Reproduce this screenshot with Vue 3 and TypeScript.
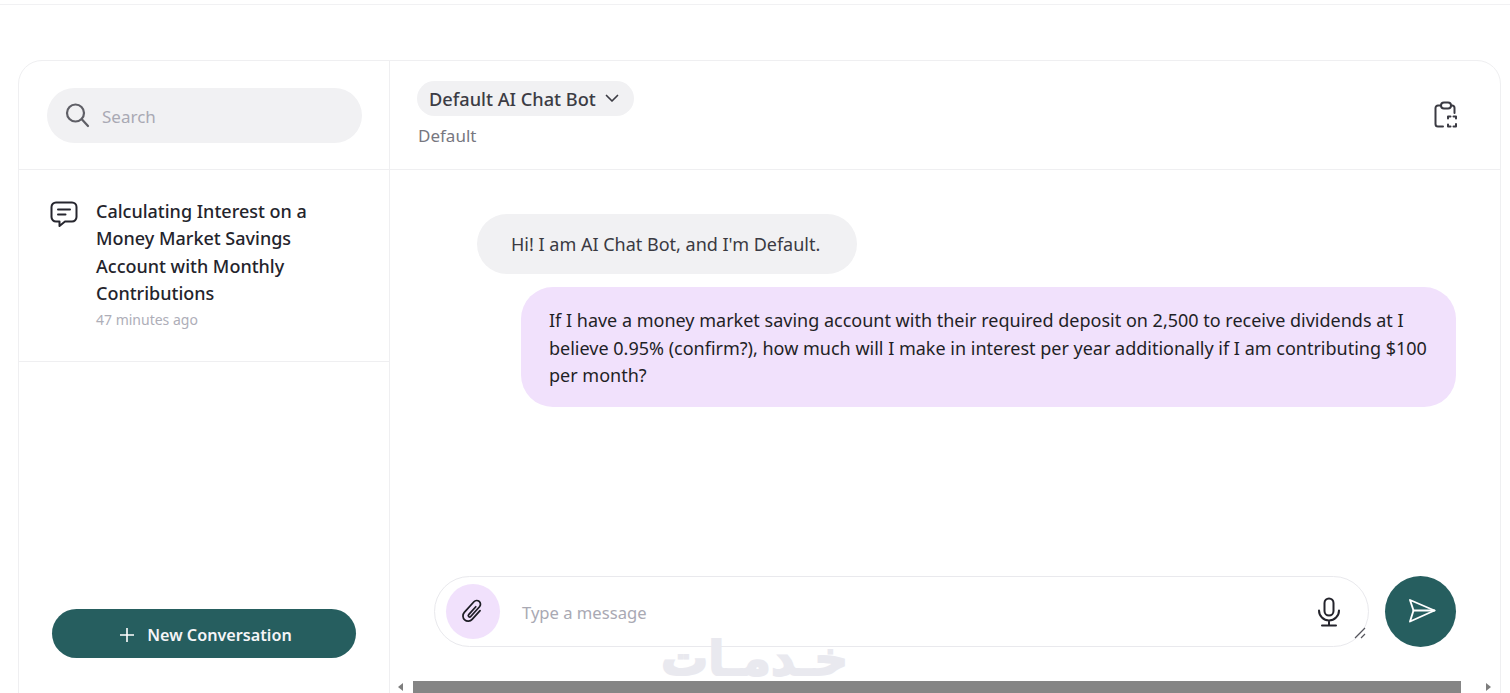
<script setup lang="ts">
const title: string = 'Calculating Interest on a Money Market Savings Account with Monthly Contributions'
</script>

<template>
  <div class="page">
    <div class="topline"></div>
    <div class="card">
      <aside class="side">
        <div class="side-head">
          <div class="search">
            <svg class="search-ico" width="26" height="26" viewBox="0 0 26 26" fill="none" stroke="#5f5f66" stroke-width="2.2" stroke-linecap="round"><circle cx="11.5" cy="11" r="8.5"/><path d="M17.8 17.2 24 24"/></svg>
            <span class="search-text">Search</span>
          </div>
        </div>
        <div class="conv">
          <svg class="conv-ico" width="28" height="27" viewBox="0 0 28 27" fill="none" stroke="#26262e" stroke-width="2" stroke-linecap="round" stroke-linejoin="round"><path d="M6 1.5h16a4.500 4.500 0 0 1 4.500 4.500v10a4.500 4.500 0 0 1-4.500 4.500h-7l-5.500 4.500v-4.500h-3.500a4.500 4.500 0 0 1-4.500-4.500v-10a4.500 4.500 0 0 1 4.500-4.500z"/><path d="M8 8.500h12M8 13.500h7.500"/></svg>
          <div class="conv-body">
            <div class="conv-title">{{ title }}</div>
            <div class="conv-time">47 minutes ago</div>
          </div>
        </div>
        <div class="side-foot">
          <button class="new-btn">
            <svg width="16" height="16" viewBox="0 0 16 16" fill="none" stroke="#fff" stroke-width="1.600"><path d="M8 1v14M1 8h14"/></svg>
            <span>New Conversation</span>
          </button>
        </div>
      </aside>
      <main class="main">
        <header class="main-head">
          <div class="head-left">
            <div class="bot-pill">
              <span>Default AI Chat Bot</span>
              <svg width="14" height="9" viewBox="0 0 14 9" fill="none" stroke="#3c3c44" stroke-width="1.700" stroke-linecap="round" stroke-linejoin="round"><path d="M1.500 1.500 7 7l5.500-5.500"/></svg>
            </div>
            <div class="bot-sub">Default</div>
          </div>
          <svg class="clip" width="24" height="28" viewBox="0 0 24 28" fill="none" stroke="#3a3a42" stroke-width="2" stroke-linecap="round" stroke-linejoin="round">
            <path d="M6.500 4.500h-2.500a2.500 2.500 0 0 0-2.500 2.500v16a2.500 2.500 0 0 0 2.500 2.500h5"/>
            <path d="M17.500 4.500h1a2.500 2.500 0 0 1 2 2.500v5"/>
            <rect x="7" y="1.500" width="10" height="6" rx="3"/>
            <path d="M14 17.500v-2h2.500M19.500 15.500h2.500v2M22 23v2.500h-2.500M16.500 25.500h-2.500v-2"/>
          </svg>
        </header>
        <div class="messages">
          <div class="bubble bot">Hi! I am AI Chat Bot, and I'm Default.</div>
          <div class="bubble user">If I have a money market saving account with their required deposit on 2,500 to receive dividends at I believe 0.95% (confirm?), how much will I make in interest per year additionally if I am contributing $100 per month?</div>
        </div>
        <div class="composer">
          <div class="input">
            <div class="attach">
              <svg width="30" height="30" viewBox="0 0 24 24" fill="none" stroke="#1d1d24" stroke-width="1.400" stroke-linecap="round" stroke-linejoin="round"><path transform="rotate(42 12 12)" d="M16 8v9.500a4.200 4.200 0 0 1-8.400 0V6a3 3 0 0 1 6 0v10.500a1.100 1.100 0 0 1-2.200 0V8"/></svg>
            </div>
            <span class="placeholder">Type a message</span>
            <svg class="mic" width="24" height="30" viewBox="0 0 24 30" fill="none" stroke="#24242c" stroke-width="2" stroke-linecap="round"><rect x="7.500" y="1.500" width="9" height="17" rx="4.500"/><path d="M2 13.500a10 10 0 0 0 20 0M12 23.500v5M5 28.500h14"/></svg>
            <svg class="grip" width="12" height="12" viewBox="0 0 12 12" fill="none" stroke="#55555c" stroke-width="1.200"><path d="M1 11 11 1M7 11l4-4"/></svg>
          </div>
          <button class="send">
            <svg class="send-ico" width="28" height="26" viewBox="0 0 28 26" fill="none" stroke="#fff" stroke-width="1.900" stroke-linejoin="round" stroke-linecap="round"><path d="M2 2 26.500 12.500 2 23.500 5.500 12.500z"/><path d="M5.500 12.500h21"/></svg>
          </button>
        </div>
        <div class="mark" dir="rtl">خـدمـات</div>
        <div class="hscroll">
          <svg class="arrow" width="7" height="8" viewBox="0 0 7 8"><path d="M6 0v8L1 4z" fill="#7d7d7d"/></svg>
          <div class="thumb"></div>
          <svg class="arrow" width="7" height="8" viewBox="0 0 7 8"><path d="M1 0v8l5-4z" fill="#7d7d7d"/></svg>
        </div>
      </main>
    </div>
  </div>
</template>

<style>
html, body { margin: 0; background: #fff; overflow: hidden; }
</style>

<style scoped>
.page {
  width: 1510px;
  height: 693px;
  overflow: hidden;
  background: #fff;
  font-family: "Noto Sans", "Open Sans", sans-serif;
  box-sizing: border-box;
}
.topline { height: 4px; border-bottom: 1px solid #f1f1f3; }
.card {
  margin: 55px 9px 0 18px;
  height: 660px;
  box-sizing: border-box;
  border: 1px solid #efeff1;
  border-radius: 24px;
  display: flex;
}
.side {
  width: 370px;
  flex: none;
  border-right: 1px solid #efeff1;
  display: flex;
  flex-direction: column;
}
.side-head {
  height: 109px;
  box-sizing: border-box;
  border-bottom: 1px solid #efeff1;
  padding: 27px 27px 0 28px;
}
.search {
  height: 55px;
  border-radius: 28px;
  background: #f1f1f3;
  display: flex;
  align-items: center;
  padding-left: 17px;
}
.search-ico { margin-right: 12px; margin-top: -2px; }
.search-text { font-size: 17px; color: #a9a9b3; padding-top: 1px; }
.conv {
  height: 192px;
  box-sizing: border-box;
  border-bottom: 1px solid #efeff1;
  padding: 28px 20px 0 31px;
  display: flex;
}
.conv-ico { flex: none; margin-top: 3px; margin-right: 18px; }
.conv-title {
  font-size: 18px;
  font-weight: 500;
  line-height: 27.400px;
  color: #24242c;
  width: 240px;
}
.conv-time { font-size: 14px; color: #aeaeb8; line-height: 20px; margin-top: 2px; }
.side-foot { margin-top: 247px; padding-left: 33px; }
.new-btn {
  width: 304px;
  height: 49px;
  border: none;
  border-radius: 25px;
  background: #265e5f;
  color: #f5f5f7;
  font-family: inherit;
  font-size: 16.200px;
  font-weight: 600;
  display: flex;
  align-items: center;
  justify-content: center;
  gap: 12px;
  padding: 2px 0 0 3px;
}
.main {
  flex: 1;
  min-width: 0;
  position: relative;
  display: flex;
  flex-direction: column;
}
.main-head {
  height: 109px;
  flex: none;
  box-sizing: border-box;
  border-bottom: 1px solid #efeff1;
  padding: 20px 42px 0 27px;
  display: flex;
  justify-content: space-between;
  align-items: flex-start;
}
.bot-pill {
  height: 35px;
  box-sizing: border-box;
  border-radius: 18px;
  background: #f1f1f3;
  padding: 0 15px 0 12px;
  display: inline-flex;
  align-items: center;
  gap: 9px;
  font-size: 18.200px;
  font-weight: 500;
  color: #3c3c44;
}
.bot-sub { font-size: 17px; color: #77777f; margin-top: 8px; line-height: 24px; padding-left: 1px; }
.clip { margin-top: 20px; }
.messages {
  height: 406px;
  flex: none;
  box-sizing: border-box;
  padding: 44px 44px 0 87px;
  display: flex;
  flex-direction: column;
  align-items: flex-start;
}
.bubble { font-size: 18px; line-height: 27.500px; box-sizing: border-box; }
.bot {
  width: 380px;
  height: 60px;
  border-radius: 30px;
  background: #f1f1f3;
  color: #3a3a42;
  padding: 17px 0 0 34px;
}
.user {
  align-self: flex-end;
  width: 935px;
  height: 120px;
  margin-top: 13px;
  border-radius: 32px;
  background: #f1e1fc;
  color: #1f1f26;
  padding: 20px 20px 0 28px;
}
.composer {
  flex: none;
  height: 105px;
  padding: 0 44px 0 44px;
  display: flex;
  gap: 16px;
  align-items: flex-start;
}
.input {
  width: 935px;
  height: 71px;
  box-sizing: border-box;
  border: 1px solid #e9e9ed;
  border-radius: 36px;
  display: flex;
  align-items: center;
  padding-left: 11px;
  position: relative;
}
.attach {
  width: 54px;
  height: 55px;
  margin-top: -1px;
  border-radius: 50%;
  background: #f1e1fc;
  display: flex;
  align-items: center;
  justify-content: center;
  flex: none;
}
.placeholder { font-size: 16.600px; color: #a9a9b3; margin-left: 22px; flex: 1; padding-top: 1px; }
.mic { margin-right: 27px; }
.grip { position: absolute; right: 2px; bottom: 7px; }
.send {
  width: 71px;
  height: 71px;
  border: none;
  border-radius: 50%;
  background: #265e5f;
  flex: none;
  display: flex;
  align-items: center;
  justify-content: center;
  padding: 0;
}
.send-ico { margin: -2px 0 0 2px; }
.mark {
  position: absolute;
  left: 252px;
  top: 568px;
  width: 225px;
  text-align: center;
  font-family: "DejaVu Sans", sans-serif;
  font-weight: 700;
  font-size: 47px;
  line-height: 60px;
  color: #e9e9ef;
  -webkit-text-stroke: 2px #e9e9ef;
  white-space: nowrap;
  pointer-events: none;
}
.hscroll {
  position: absolute;
  left: 0;
  right: 0;
  top: 620px;
  height: 12px;
  display: flex;
  align-items: center;
  padding-left: 7px;
  padding-right: 8px;
  background: transparent;
}
.thumb { width: 1048px; height: 12px; background: #858585; margin: 0 24px 0 9px; }
.arrow { flex: none; }
</style>
